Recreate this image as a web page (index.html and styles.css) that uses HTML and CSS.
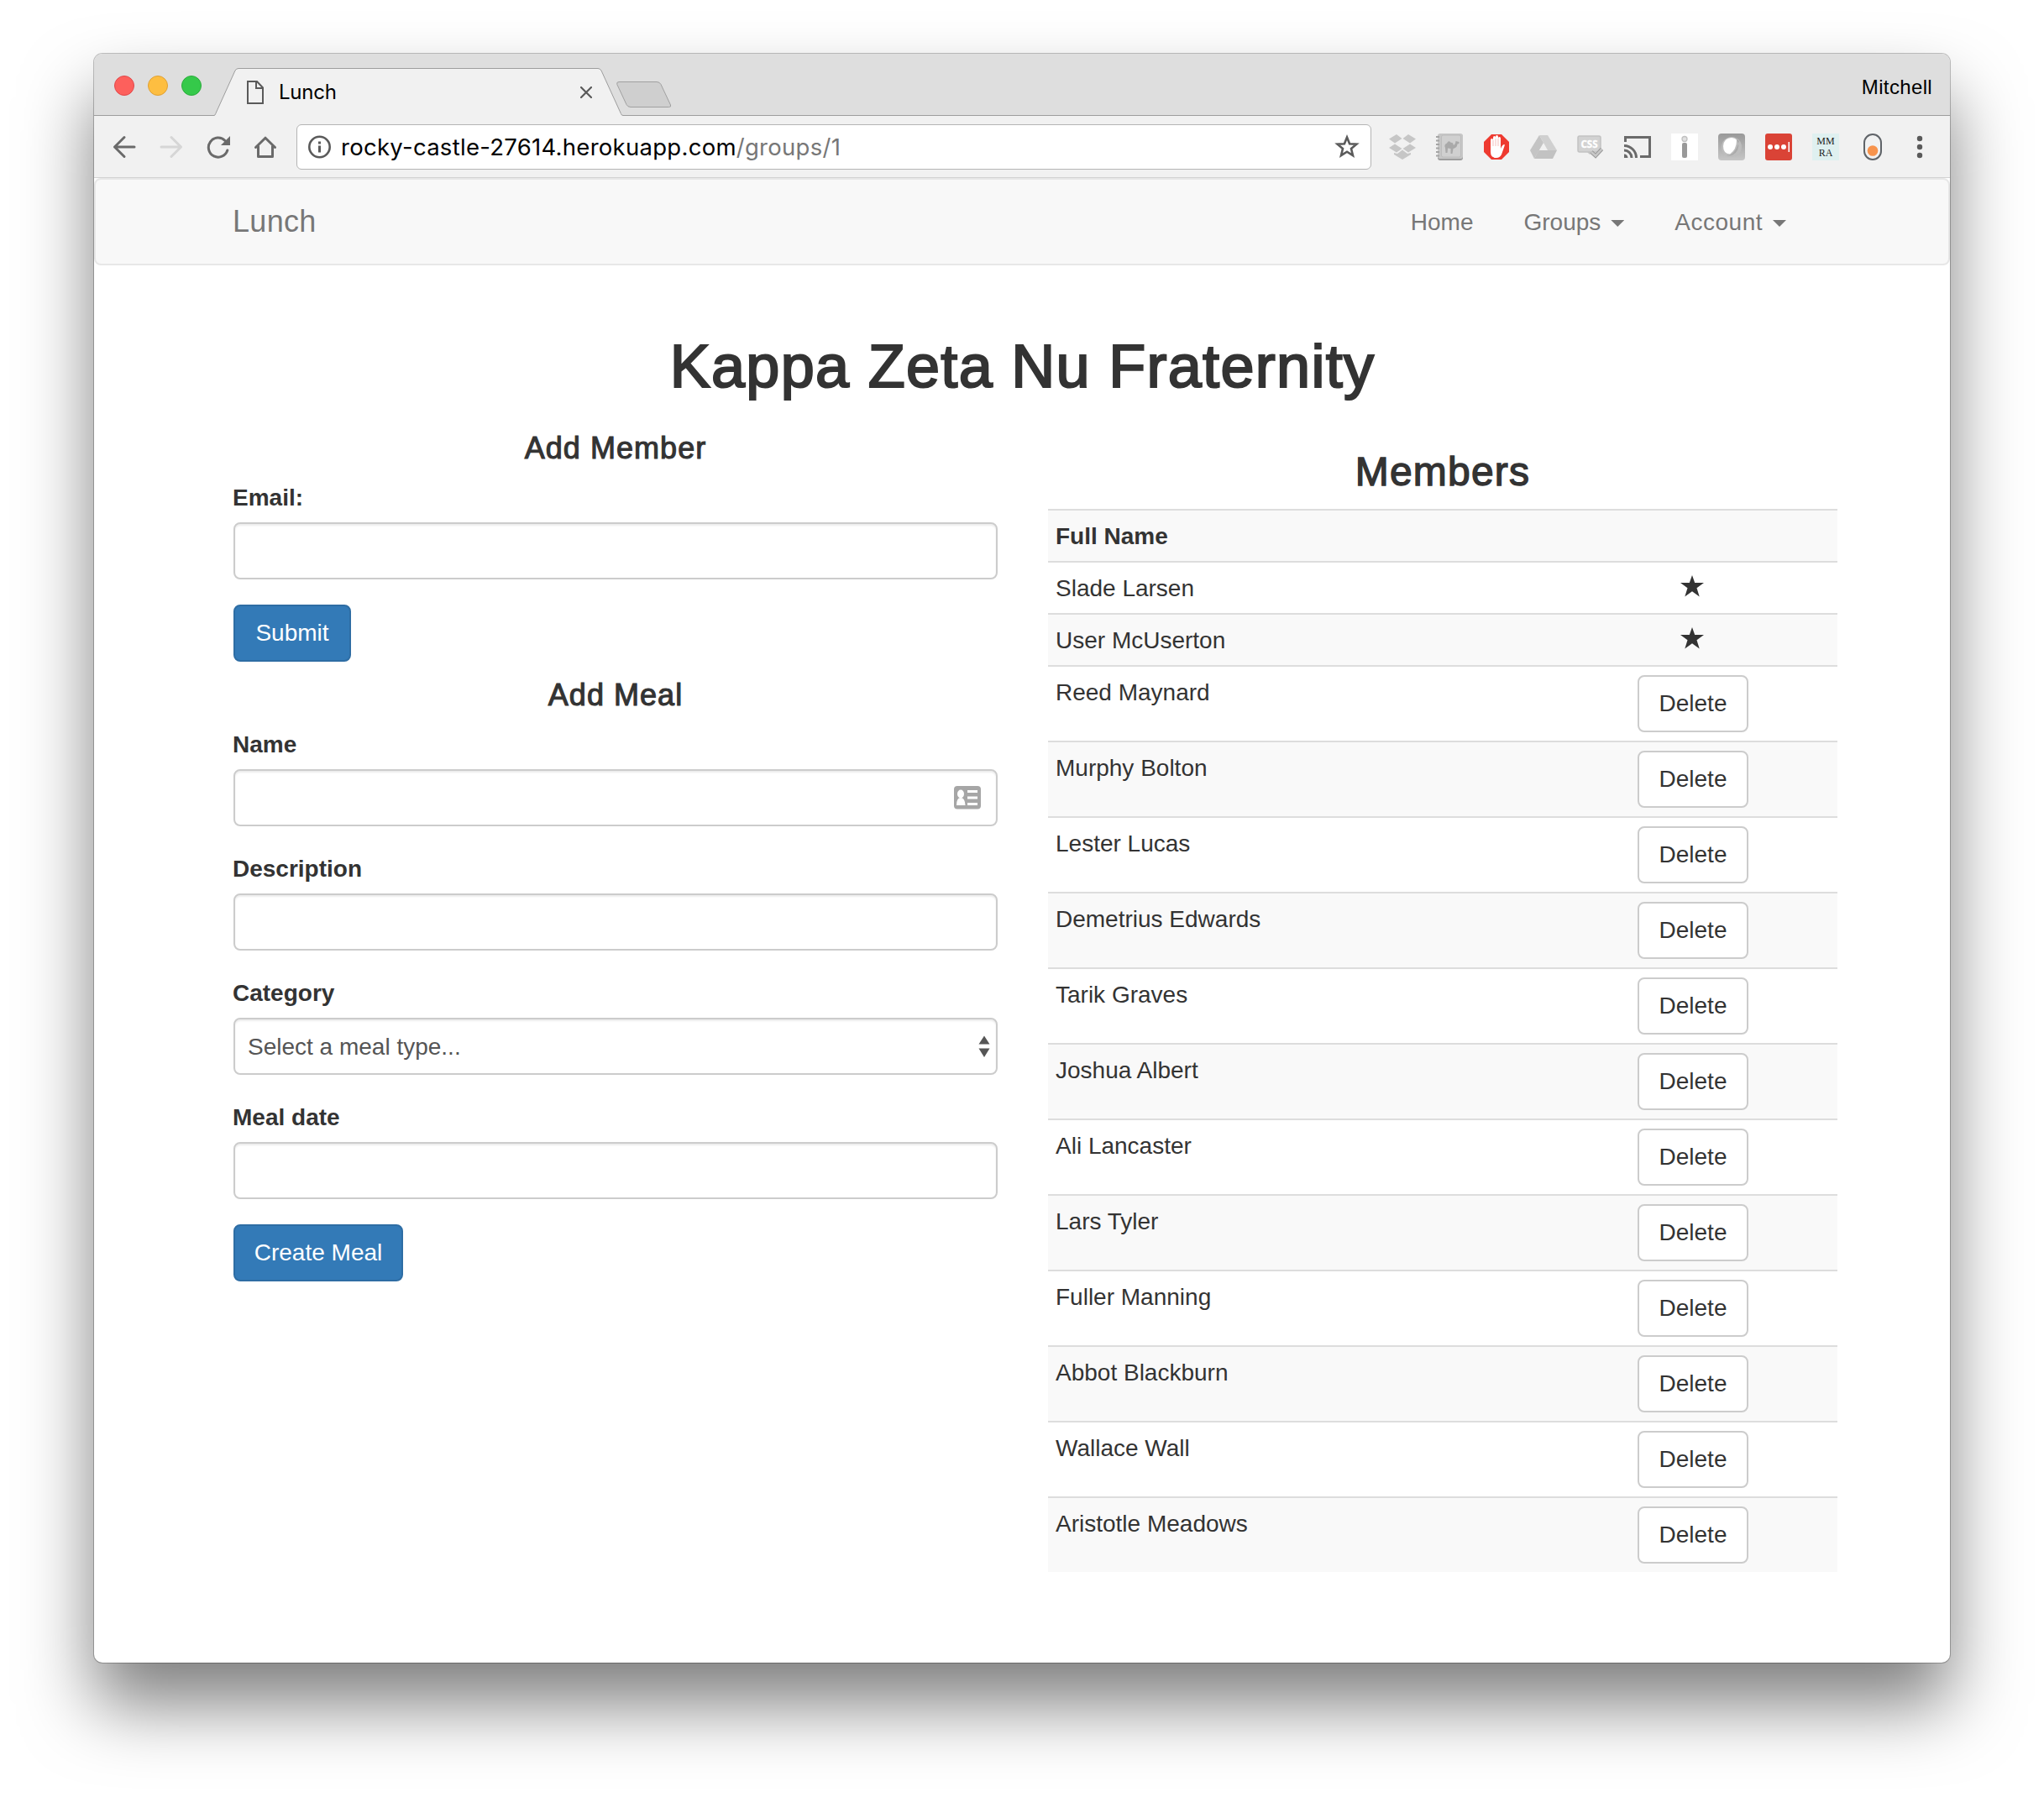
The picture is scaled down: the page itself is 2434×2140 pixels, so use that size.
FILE: index.html
```html
<!DOCTYPE html>
<html lang="en">
<head>
<meta charset="utf-8">
<title>Lunch</title>
<link rel="stylesheet" href="styles.css">
</head>
<body>
<div class="window">
  <header class="tabstrip">
    <div class="lights"><span class="light red"></span><span class="light amber"></span><span class="light green"></span></div>
    <div class="tab">
      <svg class="tab-shape" width="488" height="57" viewBox="0 0 488 57"><path d="M0 56.5H1Q2 56.5 2.700 54.500L26 3Q27.500.5 30 .5H458Q460.500.5 462 3L485.500 54.500Q486 56.500 488 56.500V57H0Z" fill="#f1f1f1"/><path d="M0 56.500H1Q2 56.500 2.700 54.500L26 3Q27.500.5 30 .5H458Q460.500.5 462 3L485.500 54.500Q486 56.500 488 56.500" fill="none" stroke="#9d9d9d"/></svg>
      <svg class="favicon" width="20" height="28" viewBox="0 0 20 28"><path d="M1 1H12L19 8.500V27H1ZM11 1V9H19" fill="none" stroke="#5a5a5a" stroke-width="2"/></svg>
      <span class="tab-title">Lunch</span>
      <svg class="tab-close" width="14" height="14" viewBox="0 0 14 14"><path d="M1 1L13 13M13 1L1 13" stroke="#5a5a5a" stroke-width="2.200" stroke-linecap="round"/></svg>
    </div>
    <svg class="new-tab" width="66" height="33" viewBox="0 0 66 33"><path d="M3 .5H48Q51.500.5 53 3.500L64.500 28Q65.500 30.500 62.500 30.500H17Q13.500 30.500 12 27.500L.8 3.500Q0 .5 3 .5Z" fill="#cfcfcf" stroke="#a0a0a0"/></svg>
    <span class="profile">Mitchell</span>
  </header>
  <div class="toolbar">
    <div class="slot"><svg width="28" height="28" viewBox="0 0 28 28"><path d="M14 2.500L2.500 14L14 25.500M2.500 14H26" fill="none" stroke="#6a6a6a" stroke-width="3" stroke-linecap="round" stroke-linejoin="round"/></svg></div>
    <div class="slot"><svg width="28" height="28" viewBox="0 0 28 28"><path d="M14 2.500L25.500 14L14 25.500M25.500 14H2" fill="none" stroke="#d6d6d6" stroke-width="3" stroke-linecap="round" stroke-linejoin="round"/></svg></div>
    <div class="slot"><svg width="28" height="28" viewBox="0 0 28 28"><path d="M22 6.500A11.500 11.500 0 1 0 24.800 18" fill="none" stroke="#6a6a6a" stroke-width="3" stroke-linecap="round"/><path d="M28 1V12H17Z" fill="#6a6a6a"/></svg></div>
    <div class="slot"><svg width="28" height="28" viewBox="0 0 28 28"><path d="M2.500 14.500L14 3.200L25.500 14.500M5.500 13V25.500H22.500V13" fill="none" stroke="#6a6a6a" stroke-width="3" stroke-linecap="round" stroke-linejoin="round"/></svg></div>
    <div class="omnibox">
      <svg width="28" height="28" viewBox="0 0 28 28"><circle cx="14.500" cy="14" r="12.200" fill="none" stroke="#5a5a5a" stroke-width="2.600"/><path d="M13 7.500H16V10.500H13ZM13 12.500H16V20.500H13Z" fill="#5a5a5a"/></svg>
      <span class="url"><span class="host">rocky-castle-27614.herokuapp.com</span>/groups/1</span>
      <svg width="30" height="29" viewBox="0 0 30 29"><path d="M15 3.500L18.100 11.200L26.400 11.700L20 17L22 25.200L15 20.700L8 25.200L10 17L3.600 11.700L11.900 11.200Z" fill="none" stroke="#5a5a5a" stroke-width="2.600"/></svg>
    </div>
    <div class="extensions">
      <div class="slot"><svg width="32" height="32" viewBox="0 0 32 32" fill="#c6c6c6"><path d="M9 1L15.500 6L7 11.500L0 6.500ZM23 1L32 6.500L25 11.500L16.500 6ZM7 12.500L15.500 18L9 22.500L0 17ZM25 12.500L32 17L23 22.500L16.500 18ZM16 19.500L22 24L26 23V25L16 31L6 25V23L10 24Z"/></svg></div>
      <div class="slot"><svg width="32" height="32" viewBox="0 0 32 32"><rect x="2" y="1" width="30" height="31" rx="3" fill="#9d9d9d"/><rect x="2" y="0" width="30" height="30" rx="3" fill="#c6c6c6"/><rect x="6.500" y="2" width="23" height="26" rx="2" fill="#d0d0d0" stroke="#bcbcbc"/><path d="M0 4H4M0 8.500H4M0 13H4M0 17.500H4M0 22H4M0 26.500H4" stroke="#a5a5a5" stroke-width="2"/><path d="M11.500 23L11 17Q9 13 13 11.500Q15 7.500 18 11Q20 10 21 14Q23 13 23.500 9L27.500 10V12L25.500 12.500Q25 17 20.500 18L19.500 24H17.500V18L14 17.500L13.500 23Z" fill="#a9a9a9"/></svg></div>
      <div class="slot"><svg width="32" height="32" viewBox="0 0 32 32"><path d="M10 1H22L31 10V22L22 31H10L1 22V10Z" fill="#ee3a30"/><path d="M9 8Q9 6 10.500 6T12 8V14V5Q12 3 13.500 3T15 5V13V4Q15 2 16.500 2T18 4V14V6Q18 4 19.500 4T21 6V18Q23 13 25.500 13Q26 13 25.500 15L22 25Q20 29 16 29Q9 29 9 22Z" fill="#fff"/><path d="M12 8V15M15 6V15M18 6V15" stroke="#f0a8a2" stroke-width=".7"/></svg></div>
      <div class="slot"><svg width="32" height="32" viewBox="0 0 32 32"><path d="M11 2L0 20L5 30L16 11Z" fill="#c4c4c4"/><path d="M11 2H21L32 20H21Z" fill="#d0d0d0"/><path d="M5 30L10.500 20H32L27 30Z" fill="#c2c2c2"/></svg></div>
      <div class="slot"><svg width="32" height="32" viewBox="0 0 32 32"><path d="M11 21H19L15 25Z" fill="#c4c4c4"/><rect x="1" y="3" width="27" height="19" rx="2" fill="#d2d2d2" stroke="#c2c2c2" stroke-width="1.500"/><text x="14.500" y="17.200" text-anchor="middle" class="css-mark">CSS</text><path d="M17 22L22 26.500L29.500 18.500" fill="none" stroke="#999" stroke-width="4.500"/><path d="M17 22L22 26.500L29.500 18.500" fill="none" stroke="#c8c8c8" stroke-width="2.500"/></svg></div>
      <div class="slot"><svg width="34" height="28" viewBox="0 0 34 28" fill="none" stroke="#6a6a6a" stroke-width="3"><path d="M2.500 8V2.500H31.500V25.500H20"/><path d="M1 12.500A14.500 14.500 0 0 1 15.500 27M1 18A9 9 0 0 1 10 27"/><path d="M1 22.500A4.500 4.500 0 0 1 5.500 27H1Z" fill="#6a6a6a" stroke="none"/></svg></div>
      <div class="slot"><svg width="32" height="32" viewBox="0 0 32 32"><path d="M0 0H32V32H0Z" fill="#fff"/><circle cx="16" cy="6.500" r="3" fill="#e0e0e0" stroke="#c0c0c0" stroke-width="1.300"/><rect x="13" y="11" width="6" height="18" rx="2" fill="#999"/></svg></div>
      <div class="slot"><svg width="32" height="32" viewBox="0 0 32 32"><defs><linearGradient id="tile" x2="0" y2="1"><stop stop-color="#999"/><stop offset="1" stop-color="#c6c6c6"/></linearGradient></defs><rect width="32" height="32" rx="4" fill="url(#tile)"/><circle cx="16" cy="16" r="12" fill="#bdbdbd"/><path d="M19 4.500A12 12 0 0 1 9 26Q20 27 25 9Z" fill="#aaa"/><path d="M6 15Q7 5 16 5Q20 5 22 7.500Q22 19 14 24.500Q6 24 6 15Z" fill="#fff"/></svg></div>
      <div class="slot"><svg width="32" height="32" viewBox="0 0 32 32"><rect width="32" height="32" rx="3" fill="#da4336"/><g fill="#fff"><circle cx="6" cy="16" r="3"/><circle cx="14" cy="16" r="3"/><circle cx="22" cy="16" r="3"/><path d="M27.500 10H29V22H27.500Z"/></g></svg></div>
      <div class="slot"><span class="mmra">MM<br>RA</span></div>
      <div class="slot"><svg width="24" height="32" viewBox="0 0 24 32"><rect x="2" y="1" width="20" height="30" rx="10" fill="none" stroke="#5f6368" stroke-width="2"/><circle cx="12" cy="20.500" r="6.300" fill="#f7934c"/></svg></div>
      <div class="slot"><svg width="8" height="28" viewBox="0 0 8 28" fill="#5a5a5a"><circle cx="4" cy="4" r="3.200"/><circle cx="4" cy="14" r="3.200"/><circle cx="4" cy="24" r="3.200"/></svg></div>
    </div>
  </div>
  <div class="page">
    <nav class="navbar">
      <a class="brand">Lunch</a>
      <div class="links">
        <a>Home</a>
        <a>Groups<span class="caret"></span></a>
        <a><span class="account">Account</span><span class="caret"></span></a>
      </div>
    </nav>
    <h1>Kappa Zeta Nu Fraternity</h1>
    <main class="columns">
      <section class="forms">
        <h4>Add Member</h4>
        <form>
          <label for="email">Email:</label>
          <input id="email" type="text">
          <button class="btn primary submit" type="button">Submit</button>
        </form>
        <h4>Add Meal</h4>
        <form>
          <label for="name">Name</label>
          <div class="field"><input id="name" type="text">
            <svg class="card-icon" width="32" height="28" viewBox="0 0 32 28"><rect y="0" width="32" height="27.500" rx="4" fill="#a6a6a6"/><g fill="#fff"><ellipse cx="8" cy="9.500" rx="4" ry="5"/><path d="M3 23Q3 14 8 14T13.500 23Z"/><path d="M16 5H28V8H16ZM16 12.500H28V15.500H16ZM16 20H28V23H16Z"/></g></svg></div>
          <label for="description">Description</label>
          <input id="description" type="text">
          <label for="category">Category</label>
          <div class="field"><select id="category"><option>Select a meal type...</option></select>
            <svg class="arrows" width="14" height="27" viewBox="0 0 14 27" fill="#555"><path d="M7 .5L13.500 10.500H.5ZM.5 15.500H13.500L7 26Z"/></svg></div>
          <label for="date">Meal date</label>
          <input id="date" type="text">
          <button class="btn primary create" type="button">Create Meal</button>
        </form>
      </section>
      <section class="members">
        <h2>Members</h2>
        <table>
          <tr><th>Full Name</th><th></th></tr>
          <tr><td>Slade Larsen</td><td><svg class="star" width="28" height="26" viewBox="0 0 28 26"><path d="M14 0L17.200 9H28L19.500 15.200L22.700 25.500L14 19.300L5.300 25.500L8.500 15.200L0 9H10.800Z"/></svg></td></tr>
          <tr><td>User McUserton</td><td><svg class="star" width="28" height="26" viewBox="0 0 28 26"><path d="M14 0L17.200 9H28L19.500 15.200L22.700 25.500L14 19.300L5.300 25.500L8.500 15.200L0 9H10.800Z"/></svg></td></tr>
          <tr><td>Reed Maynard</td><td><button class="btn" type="button">Delete</button></td></tr>
          <tr><td>Murphy Bolton</td><td><button class="btn" type="button">Delete</button></td></tr>
          <tr><td>Lester Lucas</td><td><button class="btn" type="button">Delete</button></td></tr>
          <tr><td>Demetrius Edwards</td><td><button class="btn" type="button">Delete</button></td></tr>
          <tr><td>Tarik Graves</td><td><button class="btn" type="button">Delete</button></td></tr>
          <tr><td>Joshua Albert</td><td><button class="btn" type="button">Delete</button></td></tr>
          <tr><td>Ali Lancaster</td><td><button class="btn" type="button">Delete</button></td></tr>
          <tr><td>Lars Tyler</td><td><button class="btn" type="button">Delete</button></td></tr>
          <tr><td>Fuller Manning</td><td><button class="btn" type="button">Delete</button></td></tr>
          <tr><td>Abbot Blackburn</td><td><button class="btn" type="button">Delete</button></td></tr>
          <tr><td>Wallace Wall</td><td><button class="btn" type="button">Delete</button></td></tr>
          <tr><td>Aristotle Meadows</td><td><button class="btn" type="button">Delete</button></td></tr>
        </table>
      </section>
    </main>
  </div>
</div>
</body>
</html>
```
FILE: styles.css
```css
* { box-sizing: border-box; }
body {
  margin: 0;
  padding: 64px 112px 0;
  height: 2140px;
  overflow: hidden;
  background: #fff;
  color: #333;
  font: 28px/40px "Liberation Sans", Arial, sans-serif;
}
svg { display: block; flex: none; }
.window {
  width: 2210px;
  height: 1916px;
  border-radius: 10px;
  background: #fff;
  box-shadow: 0 0 0 1px rgba(0, 0, 0, .24), 0 50px 84px rgba(0, 0, 0, .5);
}

/* browser chrome */
.tabstrip {
  display: flex;
  height: 74px;
  padding-left: 24px;
  border-bottom: 1px solid #9d9d9d;
  border-radius: 10px 10px 0 0;
  background: #dedede;
}
.lights { display: flex; gap: 16px; width: 118px; padding-top: 26px; }
.light { width: 24px; height: 24px; border: 1px solid; border-radius: 50%; }
.red { background: #fd605c; border-color: #e2474a; }
.amber { background: #fdbe41; border-color: #dfa034; }
.green { background: #35c94a; border-color: #2bac3c; }
.tab { position: relative; display: flex; width: 488px; height: 57px; margin-top: 17px; padding-left: 40px; }
.tab-shape { position: absolute; left: 0; top: 0; }
.favicon { position: relative; margin-top: 15px; }
.tab-title { position: relative; width: 359px; margin: 9px 0 0 18px; color: #000; font: 24px/40px Inter, sans-serif; letter-spacing: -.2px; }
.tab-close { position: relative; margin-top: 22px; }
.new-tab { margin: 33px 0 0 -8px; }
.profile { margin: 20px 21px 0 auto; color: #000; font-size: 24px; letter-spacing: .35px; }
.toolbar {
  display: flex;
  align-items: center;
  height: 74px;
  padding-left: 8px;
  border-bottom: 1px solid #d2d2d2;
  background: #f1f1f1;
}
.slot { display: flex; justify-content: center; width: 56px; }
.omnibox {
  display: flex;
  align-items: center;
  width: 1280px;
  height: 54px;
  margin: 0 9px;
  padding: 0 13px 0 12px;
  border: 1px solid #b4b4b4;
  border-radius: 6px;
  background: #fff;
}
.url { flex: 1; margin-left: 12px; color: #777; font: 27.5px/40px Inter, sans-serif; letter-spacing: .28px; }
.host { color: #000; }
.extensions { display: flex; align-items: center; }
.css-mark { fill: #fff; stroke: #fff; stroke-width: .4px; font: bold 11.5px "Open Sans", sans-serif; }
.mmra {
  width: 32px;
  height: 32px;
  padding-top: 2px;
  background: #dff0f0;
  color: #222;
  font: 12px/14px "Liberation Serif", serif;
  text-align: center;
}

/* site */
.navbar {
  display: flex;
  justify-content: space-between;
  height: 104px;
  padding: 0 193px 0 163px;
  border: 2px solid #e7e7e7;
  border-radius: 8px;
  background: #f8f8f8;
  color: #777;
}
.brand { padding-top: 30px; font-size: 36px; letter-spacing: .3px; }
.links { display: flex; gap: 60px; padding-top: 31px; }
.links a { display: flex; }
.account { letter-spacing: .5px; }
.caret {
  width: 16px;
  height: 8px;
  margin: 17px 0 0 12px;
  background: #777;
  clip-path: polygon(0 0, 100% 0, 50% 100%);
}
h1, h2, h4 { margin: 0; font-weight: 400; text-align: center; }
h1 {
  padding: 81px 0 16px 1px;
  font-size: 72px;
  line-height: 79px;
  letter-spacing: 1.3px;
  -webkit-text-stroke: 2.2px #333;
}
h2 { padding-top: 43px; font-size: 48px; line-height: 53px; letter-spacing: 1.2px; -webkit-text-stroke: 1.4px #333; }
h4 { margin: 20px 0 18px; font-size: 36px; line-height: 40px; letter-spacing: 1.05px; -webkit-text-stroke: 1.1px #333; }
.columns { display: flex; gap: 60px; padding: 0 134px 0 166px; }
.forms { width: 910px; padding-top: 2px; }
.members { width: 940px; }
form { display: flex; flex-direction: column; align-items: flex-start; }
label { margin: 1px 0 9px -1px; font-weight: 700; }
.field { position: relative; width: 100%; height: 98px; }
input, select {
  appearance: none;
  width: 100%;
  height: 68px;
  margin: 0 0 30px;
  padding: 1px 15px 0;
  border: 2px solid #ccc;
  border-radius: 8px;
  background: #fff;
  box-shadow: inset 0 2px 2px rgba(0, 0, 0, .075);
  color: #555;
  font: inherit;
}
.card-icon { position: absolute; right: 20px; top: 20px; }
.arrows { position: absolute; right: 9px; top: 21px; }
.btn {
  width: 132px;
  height: 68px;
  padding: 0;
  border: 2px solid #ccc;
  border-radius: 8px;
  background: #fff;
  color: #333;
  font: inherit;
}
.primary { border-color: #2e6da4; background: #337ab7; color: #fff; }
.submit { width: 140px; }
.create { width: 202px; }
table { width: 940px; margin-top: 18px; border-collapse: separate; border-spacing: 0; table-layout: fixed; }
tr:nth-child(odd) { background: #f9f9f9; }
th, td { height: 62px; padding: 11px 9px 9px; border-top: 2px solid #ddd; text-align: left; vertical-align: top; }
th:last-child, td:last-child { width: 344px; padding: 10px 0; text-align: center; }
td .btn { display: block; margin: 0 auto; }
.star { position: relative; left: -1px; margin: 5px auto 0; fill: #333; }
```
